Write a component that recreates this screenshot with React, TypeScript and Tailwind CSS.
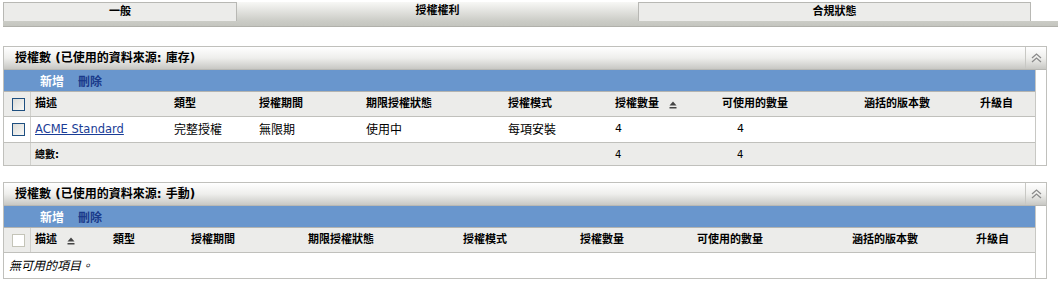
import React from "react"

const FONT = "font-['DejaVu_Sans','Noto_Sans_CJK_TC',sans-serif]"

type Col = { label: string; sort?: boolean }

const cols1: Col[] = [
  { label: "描述" },
  { label: "類型" },
  { label: "授權期間" },
  { label: "期限授權狀態" },
  { label: "授權模式" },
  { label: "授權數量", sort: true },
  { label: "可使用的數量" },
  { label: "涵括的版本數" },
  { label: "升級自" },
]

const cols2: Col[] = [
  { label: "描述", sort: true },
  { label: "類型" },
  { label: "授權期間" },
  { label: "期限授權狀態" },
  { label: "授權模式" },
  { label: "授權數量" },
  { label: "可使用的數量" },
  { label: "涵括的版本數" },
  { label: "升級自" },
]

function SortIcon({ className = "" }: { className?: string }) {
  return (
    <svg width="8" height="8" viewBox="0 0 8 8" className={className}>
      <path d="M4 0.5 L7.5 4.5 L0.5 4.5 Z" fill="#444" />
      <rect x="0.5" y="6" width="7" height="1.5" fill="#444" />
    </svg>
  )
}

function CollapseIcon() {
  return (
    <svg width="11" height="10" viewBox="0 0 11 10">
      <path d="M1 5 L5.5 1 L10 5" fill="none" stroke="#8a8a8a" strokeWidth="1.3" />
      <path d="M1 9 L5.5 5 L10 9" fill="none" stroke="#8a8a8a" strokeWidth="1.3" />
    </svg>
  )
}

function Checkbox({ disabled }: { disabled?: boolean }) {
  return disabled ? (
    <div className="w-[13px] h-[13px] border border-[#c4c4b8] bg-white" />
  ) : (
    <div className="w-[13px] h-[13px] border border-[#1e4f80] bg-gradient-to-br from-[#dcdcd8] to-[#f8f8f6]" />
  )
}

function Tabs() {
  return (
    <div className="pt-[2px] pl-[3px]">
      <div className="flex h-[19px] w-[1028px]">
        <div className="w-[234px] border border-[#b8b8b4] border-b-0 bg-[#ececea] flex items-center justify-center text-[11px] font-bold text-black">
          一般
        </div>
        <div className="w-[401px] bg-gradient-to-b from-[#f8f8f6] to-[#cbccc6] flex items-center justify-center text-[11px] font-bold text-black">
          授權權利
        </div>
        <div className="w-[393px] border border-[#b8b8b4] border-b-0 bg-[#ececea] flex items-center justify-center text-[11px] font-bold text-black">
          合規狀態
        </div>
      </div>
      <div className="h-[6px] bg-gradient-to-b from-[#cbccc6] to-[#c4c5bf] border-b border-[#b0b0aa]" />
    </div>
  )
}

function Panel({
  title,
  cols,
  grid,
  disabled,
  children,
}: {
  title: string
  cols: Col[]
  grid: string
  disabled?: boolean
  children: React.ReactNode
}) {
  return (
    <div className="ml-[3px] w-[1044px] border border-[#c0c0bc]">
      {/* header */}
      <div className="flex h-[23px] bg-gradient-to-b from-white via-[#eeeeec] to-[#c8c8c4] border-b border-[#b8b8b4]">
        <div className="flex-1 flex items-center pl-[11px] text-[12px] font-bold text-black">{title}</div>
        <div className="w-[21px] border-l border-[#c8c8c4] flex items-center justify-center">
          <CollapseIcon />
        </div>
      </div>
      <div className="flex">
        <div className="w-[1031px]">
          {/* toolbar */}
          <div className="h-[22px] bg-[#6996cd] flex items-center pl-[36px] pt-[2px] gap-[14px] text-[12px] font-bold border-b border-[#b4b4b0]">
            <span className="text-white">新增</span>
            <span className="text-[#1a3a8a]">刪除</span>
          </div>
          {/* column headers */}
          <div className={`grid ${grid} h-[25px] bg-[#ececea] border-b border-[#c0c0bc]`}>
            <div className="flex items-center pl-[8px] border-r border-[#d0d0cc]">
              <Checkbox disabled={disabled} />
            </div>
            {cols.map((c) => (
              <div key={c.label} className="flex items-center pl-[4px] text-[11px] font-bold text-black">
                {c.label}
                {c.sort && <SortIcon className="ml-[10px] mt-[2px]" />}
              </div>
            ))}
          </div>
          {children}
        </div>
        <div className="flex-1 border-l border-[#c8c8c4] bg-white" />
      </div>
    </div>
  )
}

export default function App() {
  const grid1 = "grid-cols-[27px_139px_85px_107px_142px_107px_107px_142px_116px_59px]"
  const grid2 = "grid-cols-[27px_78px_78px_117px_155px_117px_117px_155px_124px_63px]"
  return (
    <div className={`w-[1058px] h-[285px] bg-white overflow-hidden ${FONT}`}>
      <Tabs />
      <div className="h-[19px]" />
      <Panel title="授權數 (已使用的資料來源: 庫存)" cols={cols1} grid={grid1}>
        <div className={`grid ${grid1} h-[26px] bg-white border-b border-[#c0c0bc] text-[12px] text-black`}>
          <div className="flex items-center pl-[8px] border-r border-[#d0d0cc]">
            <Checkbox />
          </div>
          <div className="flex items-center pl-[4px]">
            <span className="text-[#1a3d96] underline text-[11.5px]">ACME Standard</span>
          </div>
          <div className="flex items-center pl-[4px]">完整授權</div>
          <div className="flex items-center pl-[4px]">無限期</div>
          <div className="flex items-center pl-[4px]">使用中</div>
          <div className="flex items-center pl-[4px]">每項安裝</div>
          <div className="flex items-center pl-[4px] text-[11px]">4</div>
          <div className="flex items-center pl-[19px] text-[11px]">4</div>
          <div />
          <div />
        </div>
        <div className={`grid ${grid1} h-[22px] bg-[#ececea] text-[10px] text-black`}>
          <div className="border-r border-[#d0d0cc]" />
          <div className="flex items-center pl-[4px] font-bold">總數:</div>
          <div />
          <div />
          <div />
          <div />
          <div className="flex items-center pl-[4px]">4</div>
          <div className="flex items-center pl-[19px]">4</div>
          <div />
          <div />
        </div>
      </Panel>
      <div className="h-[16px]" />
      <Panel title="授權數 (已使用的資料來源: 手動)" cols={cols2} grid={grid2} disabled>
        <div className="h-[25px] flex items-center pl-[5px] text-[12px] italic text-black bg-white">
          無可用的項目。
        </div>
      </Panel>
    </div>
  )
}
